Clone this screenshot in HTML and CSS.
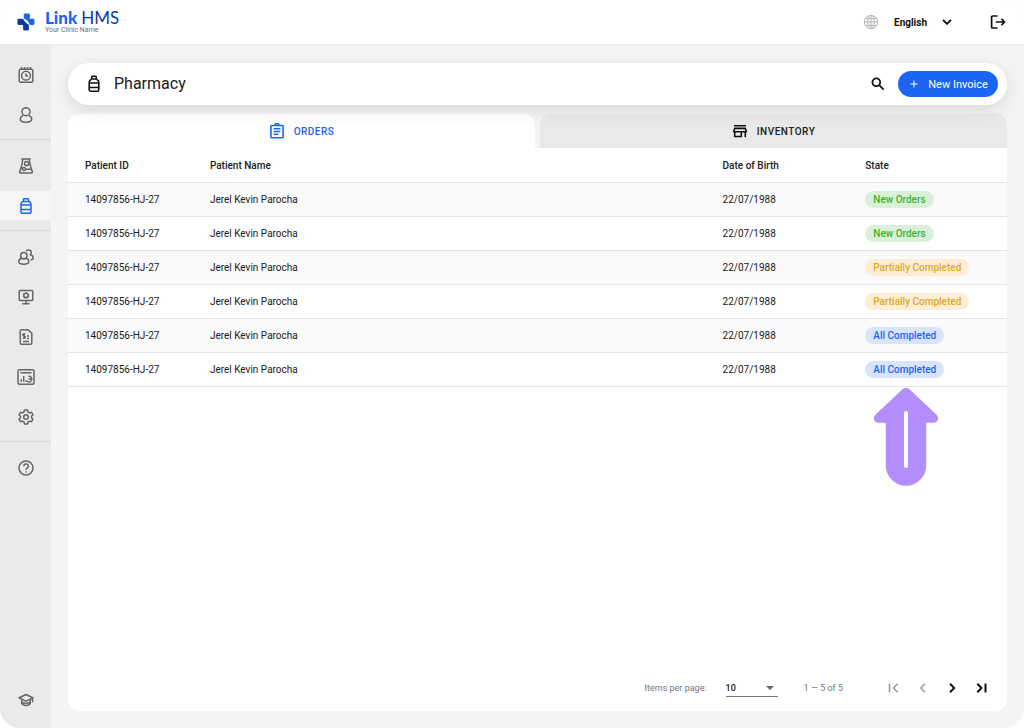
FILE: index.html
```html
<!DOCTYPE html>
<html lang="en">
<head>
<meta charset="utf-8">
<meta name="viewport" content="width=device-width, initial-scale=1">
<title>Link HMS - Pharmacy</title>
<link rel="stylesheet" href="styles.css">
</head>
<body>
<div class="app">
  <header class="topbar">
    <a class="brand" href="#" aria-label="Link HMS home">
      <svg class="brand-mark" viewBox="0 0 18 18" aria-hidden="true">
        <path fill="#1c64f2" d="M8 .5h3.600a1.300 1.300 0 0 1 1.300 1.300V5.700h3.300a1.300 1.300 0 0 1 1.300 1.300v3.600a1.300 1.300 0 0 1-1.300 1.300h-2.700a1.300 1.300 0 0 1-1.200-.9C11.700 8.700 10.300 7 7.600 5.900a1.300 1.300 0 0 1-.9-1.200V1.800A1.300 1.300 0 0 1 8 .5z"/>
        <path fill="#0b3a9c" d="M1.800 5.700h3.300c.7 0 1 .3 1.400.9 1 1.500 1.600 3 4.100 4.400.8.500 1.300.9 1.300 1.700v3.500a1.300 1.300 0 0 1-1.300 1.300H7.400a1.300 1.300 0 0 1-1.300-1.300V11.900H1.800A1.300 1.300 0 0 1 .5 10.600V7a1.300 1.300 0 0 1 1.300-1.300z"/>
      </svg>
      <span class="brand-text">
        <span class="brand-name"><b>Link</b><span>HMS</span></span>
        <span class="brand-sub">Your Clinic Name</span>
      </span>
    </a>
    <div class="top-actions">
      <button class="language" type="button">
        <svg class="globe" viewBox="0 0 16 16" aria-hidden="true"><circle cx="8" cy="8" r="6.700"/><ellipse cx="8" cy="8" rx="3.200" ry="6.700"/><path d="M8 1.300v13.400M1.300 8h13.400M2.300 4.600h11.400M2.300 11.400h11.400"/></svg>
        <span>English</span>
        <svg class="chevron" viewBox="0 0 10 6" aria-hidden="true"><path d="M1 .9l4 4 4-4"/></svg>
      </button>
      <button class="icon-button" type="button" aria-label="Log out">
        <svg class="logout" viewBox="0 0 16 16" aria-hidden="true"><path d="M7.500 2H2.600a1 1 0 0 0-1 1v10a1 1 0 0 0 1 1h4.900M5.800 8h8.600M11.500 4.900L14.600 8l-3.100 3.100"/></svg>
      </button>
    </div>
  </header>

  <div class="body">
    <nav class="sidebar" aria-label="Main">
      <div class="nav-group">
        <a class="nav-item" href="#" aria-label="Appointments"><svg viewBox="0 0 16 16"><rect x="1.200" y="2.200" width="13.600" height="13" rx="1.500"/><circle cx="8" cy="8.700" r="4.400"/><path d="M8 6.600v2.300h2M3.500 0v2M6.500 0v2M9.500 0v2M12.500 0v2"/></svg></a>
        <a class="nav-item" href="#" aria-label="Patients"><svg viewBox="0 0 16 16"><circle cx="8" cy="4.700" r="4"/><path d="M5.400 8.400C3.400 9 2.300 10.800 2.300 12.300c0 2 2.600 2.900 5.700 2.900s5.700-.9 5.700-2.900c0-1.500-1.100-3.300-3.100-3.900"/></svg></a>
      </div>
      <div class="nav-group">
        <a class="nav-item" href="#" aria-label="Laboratory"><svg viewBox="0 0 16 16"><path d="M3.300 1h9.400M4.800 1.200L4 6.500 1.700 13.800c-.2.700.1 1.200.8 1.200h11c.7 0 1-.5.8-1.200L12 6.500l-.8-5.300M3.200 10h1.500M7.400 11.300h6"/><circle cx="8.600" cy="5.500" r="2.100"/><circle cx="6" cy="10.900" r="1.500"/></svg></a>
        <a class="nav-item is-active" href="#" aria-label="Pharmacy" aria-current="page"><svg viewBox="0 0 16 16"><path d="M5.500 3.200V1.500a.8.800 0 0 1 .8-.8h3.400a.8.800 0 0 1 .8.800v1.700M5.500 3.400h5C12.200 4 13 4.900 13 6.300v7.500a1.500 1.500 0 0 1-1.500 1.500h-7A1.500 1.500 0 0 1 3 13.800V6.300c0-1.400.8-2.300 2.500-2.900zM3 7h10M3 11.500h10"/></svg></a>
      </div>
      <div class="nav-group">
        <a class="nav-item" href="#" aria-label="Staff"><svg viewBox="0 0 16 16"><circle cx="5.800" cy="6.700" r="3.200"/><path d="M3.600 9.300C1.800 9.900.8 11.300.8 12.800c0 1.700 2.200 2.400 5 2.400s5-.7 5-2.400c0-1.500-1-2.900-2.800-3.500M8 2.300C8.600.5 13 .1 13.300 3.300c.1 1.100-.4 1.900-1.100 2.500 1.800.4 2.900 1.700 3 3 .1 1.100-1 1.900-2.600 2.100"/></svg></a>
        <a class="nav-item" href="#" aria-label="Workstation"><svg viewBox="0 0 16 16"><rect x="1.200" y="1.400" width="13.600" height="10" rx=".8"/><path d="M8 11.500v3M4.300 14.700h7.400M8 3.200v1M8 8.600v1M5.200 4.800l.9.500M9.900 7.500l.9.500M5.200 8l.9-.5M9.900 5.300l.9-.5"/><circle cx="8" cy="6.400" r="2.200"/></svg></a>
        <a class="nav-item" href="#" aria-label="Invoices"><svg viewBox="0 0 16 16"><path d="M3.500.8h6.700l3.600 3.500v9.400a1.500 1.500 0 0 1-1.500 1.500H3.700a1.500 1.500 0 0 1-1.500-1.500V2.300A1.500 1.500 0 0 1 3.500.8zM5 12.500h6M9 7h2M9 9.500h2M7.200 5.300C6.500 4.700 5 4.900 5 5.900c0 1.200 2.300.9 2.300 2.200 0 1.100-1.600 1.300-2.400.5M6.100 4v6"/></svg></a>
        <a class="nav-item" href="#" aria-label="Reports"><svg class="wide" viewBox="0 0 18 16"><rect x="1" y=".8" width="16" height="14.400" rx="1.500"/><path d="M3.500 3.700h11M4.300 12.700v-2.500M6.700 12.700V7M9 12.700v-1.500M11.500 7.200a2.900 2.900 0 1 1-1.700 4.900M13.800 9.900h-2.300"/></svg></a>
        <a class="nav-item" href="#" aria-label="Settings"><svg viewBox="0 0 16 16"><path d="M6.500 1h3l.5 2 1.500.9 2-.6 1.500 2.500L13.500 7.200v1.600l1.500 1.400-1.500 2.500-2-.6-1.500.9-.5 2h-3L6 13l-1.500-.9-2 .6L1 10.200l1.500-1.400V7.200L1 5.800l1.500-2.500 2 .6L6 3z"/><circle cx="8" cy="8" r="2.300"/></svg></a>
      </div>
      <div class="nav-group">
        <a class="nav-item" href="#" aria-label="Help"><svg viewBox="0 0 16 16"><circle cx="8" cy="8" r="7"/><path d="M5.800 6.300c0-3 4.500-2.900 4.500-.1C10.300 7.900 8 7.900 8 9.900M8 11.300v1.200"/></svg></a>
      </div>
      <div class="nav-group nav-bottom">
        <a class="nav-item" href="#" aria-label="Training"><svg viewBox="0 0 16 16"><path d="M8 2.500l6.900 3.300L8 9.200 1.100 5.800zM14.600 6.200v4M3.700 7.400v4c1.200 2.700 7.400 2.700 8.600 0v-4M3.700 10c2 1.800 6.600 1.800 8.600 0"/></svg></a>
      </div>
    </nav>

    <main class="content">
      <section class="titlebar">
        <svg class="title-icon" viewBox="0 0 16 18" aria-hidden="true"><path d="M5.700 3.700V2a.8.800 0 0 1 .8-.8h3a.8.800 0 0 1 .8.800v1.700M5 4h6M5 4.500C3.800 5.200 3.200 6 3.200 7.200v7.500a1.500 1.500 0 0 0 1.500 1.500h6.600a1.500 1.500 0 0 0 1.500-1.500V7.200c0-1.200-.6-2-1.800-2.700M3.200 8h9.600M3.200 12.500h9.600"/></svg>
        <h1>Pharmacy</h1>
        <button class="icon-button search" type="button" aria-label="Search">
          <svg viewBox="0 0 14 14" aria-hidden="true"><circle cx="5.300" cy="5.300" r="3.900"/><path d="M8.200 8.200l4.500 4.500"/></svg>
        </button>
        <button class="primary" type="button">
          <svg viewBox="0 0 8 8" aria-hidden="true"><path d="M4 .5v7M.5 4h7"/></svg>
          <span>New Invoice</span>
        </button>
      </section>

      <section class="panel">
        <div class="tabs" role="tablist">
          <button class="tab is-selected" type="button" role="tab" aria-selected="true">
            <svg viewBox="0 0 16 16" aria-hidden="true"><path d="M2.700 2.500h10.600a.8.800 0 0 1 .8.800v10.600a.8.800 0 0 1-.8.800H2.700a.8.800 0 0 1-.8-.8V3.300a.8.800 0 0 1 .8-.8zM6 2.400a2 2 0 0 1 4 0M4.600 5.800h6.800M4.600 8.500h6.800M4.600 11.200h4.600"/></svg>
            <span>ORDERS</span>
          </button>
          <button class="tab" type="button" role="tab" aria-selected="false">
            <svg viewBox="0 0 16 16" aria-hidden="true"><path d="M2 2.800h12M2.700 5.400h10.600l1 3.400H1.700zM2.700 8.800v4.700h6.600V8.800M13.300 8.800v5.500"/></svg>
            <span>INVENTORY</span>
          </button>
        </div>

        <div class="card">
          <table class="orders">
            <thead>
              <tr><th class="col-id" scope="col">Patient ID</th><th class="col-name" scope="col">Patient Name</th><th class="col-dob" scope="col">Date of Birth</th><th scope="col">State</th></tr>
            </thead>
            <tbody>
              <tr><td>14097856-HJ-27</td><td>Jerel Kevin Parocha</td><td>22/07/1988</td><td><span class="chip chip-new">New Orders</span></td></tr>
              <tr><td>14097856-HJ-27</td><td>Jerel Kevin Parocha</td><td>22/07/1988</td><td><span class="chip chip-new">New Orders</span></td></tr>
              <tr><td>14097856-HJ-27</td><td>Jerel Kevin Parocha</td><td>22/07/1988</td><td><span class="chip chip-partial">Partially Completed</span></td></tr>
              <tr><td>14097856-HJ-27</td><td>Jerel Kevin Parocha</td><td>22/07/1988</td><td><span class="chip chip-partial">Partially Completed</span></td></tr>
              <tr><td>14097856-HJ-27</td><td>Jerel Kevin Parocha</td><td>22/07/1988</td><td><span class="chip chip-done">All Completed</span></td></tr>
              <tr><td>14097856-HJ-27</td><td>Jerel Kevin Parocha</td><td>22/07/1988</td><td><span class="chip chip-done">All Completed</span></td></tr>
            </tbody>
          </table>

          <svg class="pointer" viewBox="0 0 64 98" aria-hidden="true">
            <path fill="#b48eff" d="M28.500 1.300a5 5 0 0 1 7 0L62.300 26.600C65.700 30 64 34.700 59.500 34.700H52.300V77.500a20.300 20.300 0 0 1-40.600 0V34.700H4.500C0 34.700-1.700 30 1.700 26.600z"/>
            <rect x="30" y="23" width="4" height="57" rx="2" fill="#fff"/>
          </svg>

          <footer class="paginator">
            <label for="page-size">Items per page:</label>
            <span class="select-wrap">
              <select id="page-size"><option>10</option><option>25</option><option>50</option></select>
              <svg viewBox="0 0 8 4" aria-hidden="true"><path d="M0 0h8L4 4z"/></svg>
            </span>
            <span class="range">1 — 5 of 5</span>
            <div class="pager">
              <button type="button" disabled aria-label="First page"><svg viewBox="0 0 12 12"><path d="M1.500 1.500v9M9.700 1.800L5.500 6l4.200 4.200"/></svg></button>
              <button type="button" disabled aria-label="Previous page"><svg viewBox="0 0 12 12"><path d="M8 1.800L3.800 6 8 10.200"/></svg></button>
              <button type="button" aria-label="Next page"><svg viewBox="0 0 12 12"><path d="M4 1.800L8.200 6 4 10.200"/></svg></button>
              <button type="button" aria-label="Last page"><svg viewBox="0 0 12 12"><path d="M2.300 1.800L6.500 6l-4.200 4.200M10.500 1.500v9"/></svg></button>
            </div>
          </footer>
        </div>
      </section>
    </main>
  </div>
</div>
</body>
</html>
```
FILE: styles.css
```css
* { box-sizing: border-box; }

body {
  margin: 0;
  background: #fff;
  color: #202020;
  font-family: Roboto, "Liberation Sans", sans-serif;
  font-size: 10px;
}

button {
  padding: 0;
  border: 0;
  background: none;
  color: inherit;
  font: inherit;
  cursor: pointer;
}

svg {
  display: block;
  flex: none;
  fill: none;
  stroke-linejoin: round;
}

.app {
  display: flex;
  flex-direction: column;
  min-height: 100vh;
  overflow: hidden;
  border-radius: 20px;
  background: #f4f4f4;
}

/* Top bar */
.topbar {
  display: flex;
  align-items: center;
  justify-content: space-between;
  height: 45px;
  padding: 0 18px 0 17px;
  border-bottom: 1px solid #ececec;
  background: #fff;
}

.brand {
  display: flex;
  align-items: center;
  gap: 10px;
  color: inherit;
  text-decoration: none;
}

.brand-mark { width: 18px; height: 18px; }
.brand-text { display: flex; flex-direction: column; }

.brand-name {
  display: flex;
  gap: 4px;
  color: #0b3a9c;
  font-family: Lato, sans-serif;
  font-size: 17px;
  line-height: 16px;
}

.brand-name b { color: #1c64f2; font-weight: 900; }
.brand-sub { color: #707070; font-size: 7px; line-height: 8px; }

.top-actions { display: flex; align-items: center; gap: 38px; }
.language { display: flex; align-items: center; gap: 15px; font-weight: 700; color: #111; }
.globe { width: 16px; height: 16px; stroke: #b4b4b4; }
.chevron { width: 10px; height: 6px; stroke: #111; stroke-width: 2; }
.logout { width: 16px; height: 16px; stroke: #111; stroke-width: 1.7; }

/* Layout */
.body { display: flex; flex: 1; }

.sidebar {
  display: flex;
  flex-direction: column;
  flex: none;
  width: 51px;
  padding-top: 4px;
  background: #eaeaea;
}

.nav-group {
  display: flex;
  flex-direction: column;
  gap: 11px;
  padding: 11px 0 10px;
}

.nav-group + .nav-group:not(.nav-bottom) { border-top: 1px solid #d9d9d9; }
.nav-bottom { margin-top: auto; padding-bottom: 14px; }

.nav-item {
  display: flex;
  align-items: center;
  justify-content: center;
  height: 29px;
}

.nav-item svg { width: 16px; height: 16px; stroke: #666; stroke-width: 1.5; }
.nav-item svg.wide { width: 18px; }
.nav-item.is-active { background: #f6f6f6; }
.nav-item.is-active svg { stroke: #1c64f2; }

.content {
  display: flex;
  flex-direction: column;
  flex: 1;
  gap: 9px;
  min-width: 0;
  padding: 18px 17px 17px;
}

/* Page title */
.titlebar {
  position: relative;
  display: flex;
  align-items: center;
  height: 42px;
  padding: 0 9px 0 18px;
  border-radius: 21px;
  background: #fff;
  box-shadow: 0 5px 18px rgba(0, 0, 0, .11);
}

.title-icon { width: 16px; height: 18px; stroke: #111; stroke-width: 1.6; }

.titlebar h1 {
  flex: 1;
  margin: 0 0 0 12px;
  font-size: 16px;
  font-weight: 400;
  line-height: 20px;
}

.search { margin-right: 13px; }
.search svg { width: 14px; height: 14px; stroke: #111; stroke-width: 1.8; }

.primary {
  display: flex;
  align-items: center;
  justify-content: center;
  gap: 10px;
  width: 100px;
  height: 26px;
  padding-left: 2px;
  border-radius: 13px;
  background: #1c64f2;
  color: #fff;
  font-size: 11px;
}

.primary svg { width: 8px; height: 8px; stroke: #fff; }

/* Tabs */
.panel { display: flex; flex-direction: column; flex: 1; }
.tabs { display: grid; grid-template-columns: 1fr 1fr; gap: 5px; }

.tab {
  display: flex;
  align-items: center;
  justify-content: center;
  gap: 9px;
  height: 34px;
  border-radius: 10px 10px 0 0;
  background: #e9e9e9;
  font-weight: 500;
  letter-spacing: .5px;
}

.tab svg { width: 16px; height: 16px; stroke: #111; stroke-width: 1.6; }
.tab.is-selected { background: #fff; color: #1c64f2; }
.tab.is-selected svg { stroke: #1c64f2; }

/* Orders */
.card {
  position: relative;
  display: flex;
  flex-direction: column;
  flex: 1;
  border-radius: 0 0 12px 12px;
  background: #fff;
}

.orders { width: 100%; border-spacing: 0; table-layout: fixed; }

.orders th,
.orders td {
  height: 34px;
  padding: 0 0 0 17px;
  border-bottom: 1px solid #e2e4e6;
  text-align: left;
}

.orders th { height: 35px; font-weight: 500; }
.orders tbody tr:nth-child(odd) { background: #fafafa; }
.col-id { width: 13.3%; }
.col-name { width: 54.6%; }
.col-dob { width: 15.2%; }

.chip {
  display: inline-block;
  padding: 0 8px;
  border-radius: 9px;
  font-weight: 500;
  line-height: 17px;
}

.chip-new { background: #daf0d8; color: #3db52f; }
.chip-partial { background: #fbeed5; color: #dfa82a; }
.chip-done { background: #d8e4fc; color: #1c64f2; }

/* Callout arrow, drawn over the empty part of the card */
.pointer {
  position: absolute;
  top: 240px;
  right: 69px;
  width: 64px;
  height: 98px;
}

/* Paginator */
.paginator {
  display: flex;
  align-items: center;
  justify-content: flex-end;
  margin-top: auto;
  padding: 0 20px 14px 0;
  color: #757575;
  font-size: 9px;
}

.select-wrap {
  display: grid;
  align-items: center;
  width: 52px;
  margin-left: 19px;
  border-bottom: 1px solid #777;
}

.select-wrap > * { grid-area: 1 / 1; }
.select-wrap svg { width: 8px; height: 4px; margin-right: 4px; justify-self: end; fill: #666; pointer-events: none; }

.select-wrap select {
  width: 100%;
  height: 17px;
  padding: 0;
  border: 0;
  background: none;
  appearance: none;
  color: #222;
  font: inherit;
  font-weight: 500;
}

.range { margin: 0 45px 0 26px; }
.pager { display: flex; gap: 17px; }
.pager svg { width: 12px; height: 12px; stroke: #111; stroke-width: 2; }
.pager button:disabled svg { stroke: #999; stroke-width: 1.5; }
```
